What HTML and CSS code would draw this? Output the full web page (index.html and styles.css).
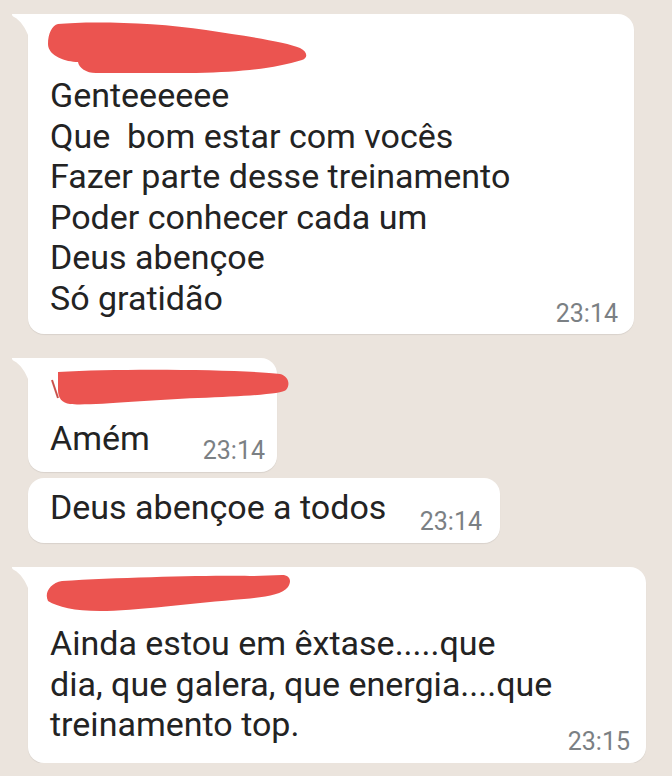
FILE: index.html
```html
<!DOCTYPE html>
<html lang="pt-BR">

<head>
    <meta charset="UTF-8" />
    <meta name="viewport" content="width=device-width, initial-scale=1.0" />
    <title>Conversa</title>
    <link rel="stylesheet" href="styles.css">
</head>

<body>
    <div class="chat">
        <div class="group">
            <div class="bubble tail msg-1">
                <div class="sender sender-1">
                    <svg width="262" height="54" viewBox="0 0 262 54">
                        <path d="M12 2 C40 -1 110 0 160 8 C200 14 240 20 254 26 C262 30 262 36 256 38 C230 46 200 50 150 51 L50 51 C40 51 33 46 32 40 C20 40 2 34 2 22 C2 12 6 3 12 2 Z" />
                    </svg>
                </div>
                <div class="body">
                    <div class="text">Genteeeeee<br>Que&nbsp; bom estar com vocês<br>Fazer parte desse treinamento<br>Poder conhecer cada um<br>Deus abençoe<br>Só gratidão</div>
                    <span class="time">23:14</span>
                </div>
            </div>
        </div>

        <div class="group">
            <div class="bubble tail msg-2">
                <div class="sender sender-2">
                    <svg width="242" height="40" viewBox="0 0 242 40">
                        <path d="M10 4 C80 0 200 2 232 6 C240 8 243 16 238 22 C234 26 200 28 150 30 C100 32 40 38 22 36 C14 35 10 30 10 22 Z" />
                        <path class="tick" d="M4 12 L10 30" />
                    </svg>
                </div>
                <div class="body">
                    <div class="text">Amém</div>
                    <span class="time">23:14</span>
                </div>
            </div>
            <div class="bubble msg-3">
                <div class="body">
                    <div class="text">Deus abençoe a todos</div>
                    <span class="time">23:14</span>
                </div>
            </div>
        </div>

        <div class="group">
            <div class="bubble tail msg-4">
                <div class="sender sender-4">
                    <svg width="248" height="40" viewBox="0 0 248 40">
                        <path d="M18 8 C80 4 180 2 210 3 L238 2 C246 2 248 8 244 14 C238 22 220 24 200 26 C150 30 90 38 56 38 C30 38 14 34 4 28 C0 20 6 10 18 8 Z" />
                    </svg>
                </div>
                <div class="body">
                    <div class="text">Ainda estou em êxtase.....que<br>dia, que galera, que energia....que<br>treinamento top.</div>
                    <span class="time">23:15</span>
                </div>
            </div>
        </div>
    </div>
</body>

</html>
```

FILE: styles.css
```css
* {
    box-sizing: border-box;
}

body {
    margin: 0;
    background-color: #ebe4dd;
    font-family: Roboto, 'Noto Sans', sans-serif;
    color: #232323;
}

.chat {
    display: flex;
    flex-direction: column;
    gap: 24px;
    padding: 14px 0 0 28px;
}

.group {
    display: flex;
    flex-direction: column;
    align-items: flex-start;
    gap: 6px;
}

.bubble {
    position: relative;
    background: #fff;
    border-radius: 16px;
    padding: 9px 16px 9px 22px;
    box-shadow: 0 1px 1px rgba(0, 0, 0, 0.08);
}

/* little tail on the first bubble of a group */
.bubble.tail {
    border-top-left-radius: 0;
}

.bubble.tail::before {
    content: "";
    position: absolute;
    top: 0;
    left: -16px;
    width: 17px;
    height: 24px;
    background: #fff;
    clip-path: path("M0 0 L17 0 L17 24 C14 14 8 6 2 3 C0 2 0 1 0 0 Z");
}

.sender svg {
    display: block;
    fill: #eb5450;
}

.sender .tick {
    fill: none;
    stroke: #c9514b;
    stroke-width: 2;
}

.sender-1 {
    margin: -1px 0 0 -4px;
    height: 53px;
}

.sender-2 {
    margin: 1px 0 0 -2px;
    height: 50px;
}

.sender-4 {
    margin: -3px 0 0 -6px;
    height: 50px;
}

.body {
    display: flex;
    justify-content: space-between;
    align-items: flex-end;
}

.text {
    font-size: 34px;
    line-height: 40.5px;
    margin-bottom: 8px;
}

.time {
    font-size: 25px;
    line-height: 24px;
    color: #7b8084;
    white-space: nowrap;
}

.msg-1 {
    width: 606px;
    padding-bottom: 8px;
}

.msg-2 {
    width: 249px;
    padding-right: 12px;
}

.msg-2 .text {
    margin-bottom: 4px;
}

.msg-3 {
    width: 472px;
    padding-right: 18px;
}

.msg-3 .text {
    margin-bottom: 7px;
}

.msg-4 {
    width: 618px;
}

.msg-4 .text {
    margin-bottom: 9px;
}
```
